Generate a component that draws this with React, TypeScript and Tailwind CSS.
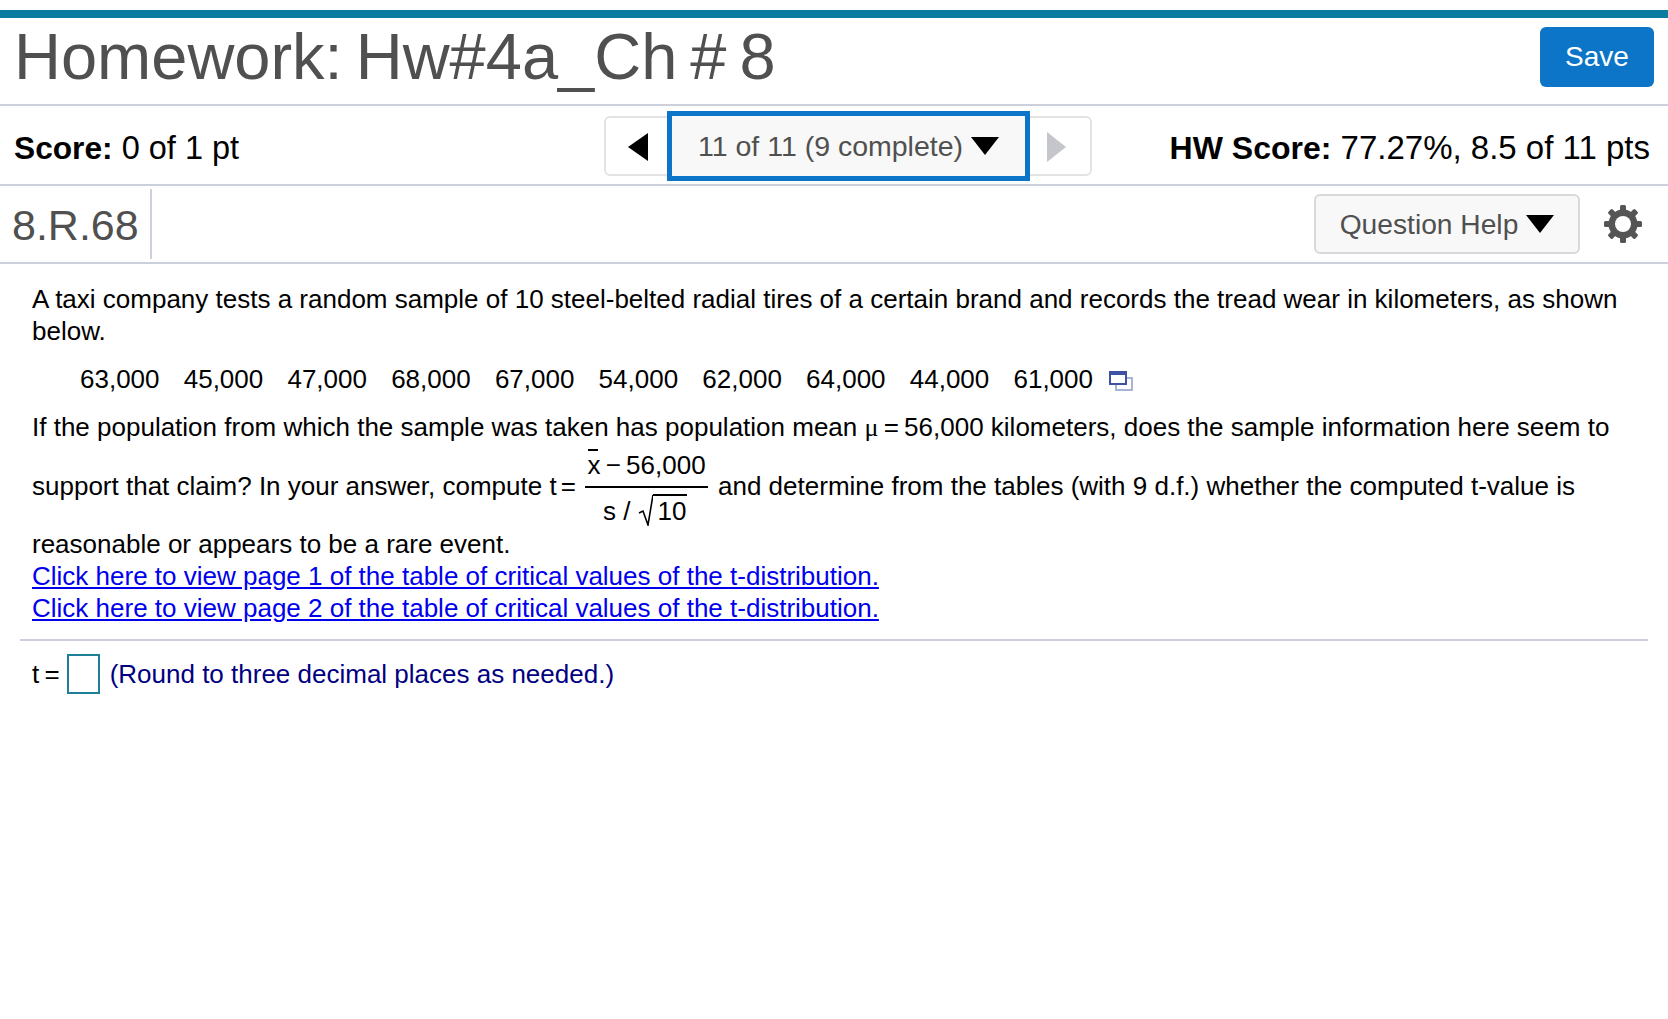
const Tri = ({ dir, color = "#000", w, h }: { dir: "down" | "left" | "right"; color?: string; w: number; h: number }) => {
  const pts = dir === "down" ? `0,0 ${w},0 ${w / 2},${h}` : dir === "left" ? `${w},0 ${w},${h} 0,${h / 2}` : `0,0 0,${h} ${w},${h / 2}`;
  return (
    <svg width={w} height={h} viewBox={`0 0 ${w} ${h}`} className="shrink-0">
      <polygon points={pts} fill={color} />
    </svg>
  );
};

const Gear = () => (
  <svg width="40" height="40" viewBox="0 0 40 40" className="shrink-0">
    {[0, 45, 90, 135].map((a) => (
      <rect key={a} x="17" y="1" width="6" height="38" rx="1.5" fill="#555" transform={`rotate(${a} 20 20)`} />
    ))}
    <circle cx="20" cy="20" r="14.5" fill="#555" />
    <circle cx="20" cy="20" r="8" fill="#fff" />
  </svg>
);

const nums = ["63,000", "45,000", "47,000", "68,000", "67,000", "54,000", "62,000", "64,000", "44,000", "61,000"];

export default function App() {
  return (
    <div className="min-h-[1019px] bg-white pt-[10px] text-black font-['Liberation_Sans',Arial,sans-serif]">
      <div className="h-2 bg-[#0a7c9f]" />
      <header className="flex h-[88px] items-center justify-between border-b-2 border-[#ccd0dc] px-[14px]">
        <h1 className="mb-[10px] text-[65px] leading-none text-[#505050] [word-spacing:-5px]">Homework: Hw#4a_Ch # 8</h1>
        <button className="mb-[9px] h-[60px] w-[114px] rounded-md bg-[#0d75c7] text-[28px] text-white">Save</button>
      </header>
      <div className="relative flex h-[80px] items-center justify-between border-b-2 border-[#ccd0dc] pl-[14px] pr-[18px] pt-[6px]">
        <div className="text-[32.5px]"><b className="text-[31.7px]">Score:</b> 0 of 1 pt</div>
        <div className="absolute left-[604px] top-[10px] flex h-[60px] w-[488px] items-center rounded-md border-2 border-[#e3e3e3]">
          <div className="mt-[2px] flex w-[62px] justify-center pl-[2px]"><Tri dir="left" w={20} h={28} /></div>
        </div>
        <div className="absolute left-[667px] top-[5px] flex h-[70px] w-[363px] items-center justify-center gap-[8px] border-[5px] border-[#0d75c7] bg-[#f8f8f8] text-[28.5px] text-[#505050]">
          <span>11 of 11 (9 complete)</span>
          <Tri dir="down" w={28} h={18} />
        </div>
        <div className="absolute left-[1047px] top-[26px]"><Tri dir="right" color="#c4c6cb" w={19} h={30} /></div>
        <div className="text-[33px]"><b className="text-[32px]">HW Score:</b> 77.27%, 8.5 of 11 pts</div>
      </div>
      <div className="flex h-[78px] items-stretch justify-between border-b-2 border-[#ccd0dc]">
        <div className="my-[3px] flex w-[152px] items-center border-r-2 border-[#ccd0dc] pl-[12px] pt-[2px] text-[43px] text-[#505050]">8.R.68</div>
        <div className="flex items-center gap-[23px] pr-[25px]">
          <button className="flex h-[60px] w-[266px] items-center justify-center gap-[8px] rounded-md border-2 border-[#d9d9d9] bg-[#f8f8f8] text-[28.2px] text-[#505050]">
            Question Help <Tri dir="down" w={28} h={18} />
          </button>
          <Gear />
        </div>
      </div>

      <main className="px-[20px] pt-[19px] text-[26px] leading-[32px]">
        <div className="px-[12px]">
          <p>A taxi company tests a random sample of 10 steel-belted radial tires of a certain brand and records the tread wear in kilometers, as shown below.</p>
          <div className="mt-[16px] flex items-center gap-[24.2px] pl-[48px]">
            {nums.map((n) => <span key={n}>{n}</span>)}
            <svg width="24" height="20" viewBox="0 0 24 20" className="-ml-[8px] mt-[4px]">
              <rect x="7" y="7" width="16" height="12" fill="none" stroke="#a9b3d6" strokeWidth="2" />
              <rect x="1" y="1" width="16" height="12" fill="#fff" stroke="#3f51a3" strokeWidth="2" />
              <rect x="1" y="1" width="16" height="3" fill="#3f51a3" />
            </svg>
          </div>
          <p className="mt-[16px]">If the population from which the sample was taken has population mean <span className="[word-spacing:-2px]"><span className="font-['Liberation_Serif',serif]">μ</span> = </span>56,000 kilometers, does the sample information here seem to</p>
          <div className="flex h-[84px] items-start">
            <span className="mt-[26px] whitespace-nowrap">support that claim? In your answer, compute <span className="[word-spacing:-3px]">t =</span></span>
            <span className="ml-[9px] flex w-[123px] shrink-0 flex-col">
              <span className="flex h-[44px] items-start justify-center border-b-2 border-black pt-[5px] whitespace-nowrap [word-spacing:-2px]">
                <span className="relative">x<span className="absolute left-[1px] top-[0px] h-[2px] w-[10px] bg-black" /></span>&nbsp;− 56,000
              </span>
              <span className="flex h-[40px] items-start whitespace-nowrap pl-[18px] pt-[6px]">
                <span className="mt-[1px]">s /</span>
                <svg width="15" height="32" viewBox="0 0 15 32" className="ml-[8px] shrink-0"><path d="M1 19 L5 17 L10 31 L15 1" fill="none" stroke="#000" strokeWidth="1.6" /></svg>
                <span className="border-t-2 border-black pl-[4px] pr-[1px] leading-[30px]">10</span>
              </span>
            </span>
            <span className="ml-[10px] mt-[26px] whitespace-nowrap">and determine from the tables (with 9 d.f.) whether the computed t-value is</span>
          </div>
          <p>reasonable or appears to be a rare event.</p>
          <a className="block text-[#0000ee] underline" href="#">Click here to view page 1 of the table of critical values of the t-distribution.</a>
          <a className="block text-[#0000ee] underline" href="#">Click here to view page 2 of the table of critical values of the t-distribution.</a>
        </div>
        <div className="mt-[15px] border-t-2 border-[#ccd0dc]" />
        <div className="mt-[13px] flex items-center px-[12px]">
          <span className="[word-spacing:-2px]">t =</span>
          <span className="ml-[7px] h-[40px] w-[33px] border-2 border-[#1f7f98]" />
          <span className="ml-[10px] text-[#000080]">(Round to three decimal places as needed.)</span>
        </div>
      </main>
    </div>
  );
}
